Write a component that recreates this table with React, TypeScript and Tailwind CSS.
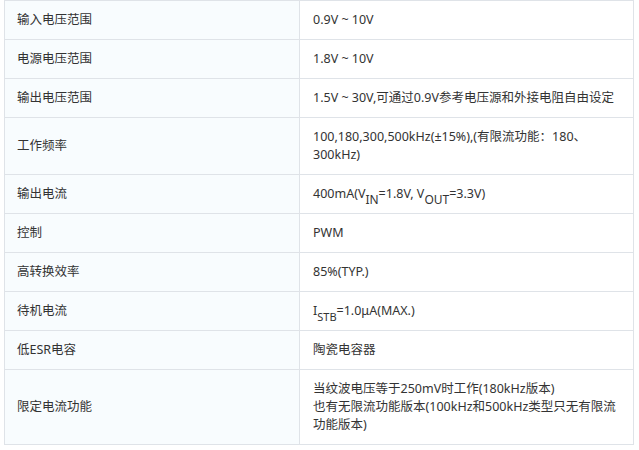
import React from "react";

const rows: [React.ReactNode, React.ReactNode][] = [
  ["输入电压范围", "0.9V ~ 10V"],
  ["电源电压范围", "1.8V ~ 10V"],
  ["输出电压范围", "1.5V ~ 30V,可通过0.9V参考电压源和外接电阻自由设定"],
  ["工作频率", "100,180,300,500kHz(±15%),(有限流功能：180、300kHz)"],
  [
    "输出电流",
    <>
      400mA(V<sub className="text-[12px] align-[-3px] leading-none">IN</sub>=1.8V, V
      <sub className="text-[12px] align-[-3px] leading-none">OUT</sub>=3.3V)
    </>,
  ],
  ["控制", "PWM"],
  ["高转换效率", "85%(TYP.)"],
  [
    "待机电流",
    <>
      I<sub className="text-[11px] align-[-3px] leading-none">STB</sub>=1.0μA(MAX.)
    </>,
  ],
  ["低ESR电容", "陶瓷电容器"],
  [
    "限定电流功能",
    <>
      当纹波电压等于250mV时工作(180kHz版本)
      <br />
      也有无限流功能版本(100kHz和500kHz类型只无有限流功能版本)
    </>,
  ],
];

export default function App() {
  return (
    <div
      className="w-[639px] h-[450px] bg-white pl-[4px] text-[#333] text-[12.5px] leading-[18px]"
      style={{ fontFamily: '"Noto Sans", "Noto Sans CJK SC", sans-serif' }}
    >
      <table className="border-collapse w-[630px] table-fixed">
        <colgroup>
          <col className="w-[295px]" />
          <col />
        </colgroup>
        <tbody>
          {rows.map(([k, v], i) => (
            <tr key={i}>
              <td className="border border-[#dfe3e8] bg-[#f8fcfe] pl-[12px] pr-[12px] py-[10px] align-middle">
                {k}
              </td>
              <td className="border border-[#dfe3e8] bg-white pl-[13px] pr-[12px] py-[10px] align-middle">
                {v}
              </td>
            </tr>
          ))}
        </tbody>
      </table>
    </div>
  );
}
